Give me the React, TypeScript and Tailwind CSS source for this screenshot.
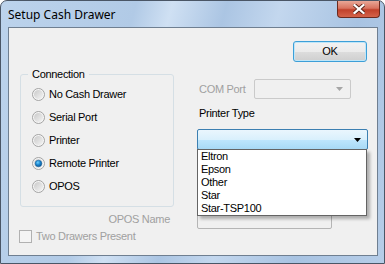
import React from "react";

const OPTIONS = ["No Cash Drawer", "Serial Port", "Printer", "Remote Printer", "OPOS"];
const PRINTERS = ["Eltron", "Epson", "Other", "Star", "Star-TSP100"];

function Radio({ checked }: { checked: boolean }) {
  return (
    <svg width="13" height="13" viewBox="0 0 13 13" className="flex-none">
      <defs>
        <linearGradient id="rg" x1="0" y1="0" x2="1" y2="1">
          <stop offset="0" stopColor="#c9c9c9" />
          <stop offset="1" stopColor="#f4f4f4" />
        </linearGradient>
        <radialGradient id="dot" cx="0.4" cy="0.35" r="0.7">
          <stop offset="0" stopColor="#6fd0ff" />
          <stop offset="0.5" stopColor="#1a86cf" />
          <stop offset="1" stopColor="#0b4f8c" />
        </radialGradient>
      </defs>
      <circle cx="6.5" cy="6.5" r="6" fill="#f5f5f5" stroke="#a3a3a3" />
      <circle cx="6.5" cy="6.5" r="4.5" fill="url(#rg)" />
      {checked && <circle cx="6.5" cy="6.5" r="3.3" fill="url(#dot)" stroke="#0f5d9a" strokeWidth="0.5" />}
    </svg>
  );
}

function Arrow({ color }: { color: string }) {
  return (
    <svg width="7" height="4" viewBox="0 0 7 4">
      <path d="M0 0h7L3.5 4z" fill={color} />
    </svg>
  );
}

export default function App() {
  return (
    <div className="w-[385px] h-[264px] overflow-hidden font-['Liberation_Sans',Arial,sans-serif] text-[11px] leading-[13px] tracking-[-0.3px] text-black">
      <div className="h-[264px] rounded-t-[7px] border border-[#4a5666] bg-[linear-gradient(105deg,#bcd3ec_0%,#b1cae6_30%,#cfe0f3_38%,#abc5e3_50%,#c3d7ee_62%,#a8c3e2_80%,#b6cde8_100%)]">
        <div className="flex h-[26px] items-start justify-between">
          <span className="pl-[7px] pt-[6px] font-['Noto_Sans',sans-serif] text-[12px] leading-[16px] tracking-normal text-black">Setup Cash Drawer</span>
          <div className="mr-[4px] flex h-[17px] w-[43px] items-center justify-center rounded-b-[4px] border border-t-0 border-[#6b2a1f] bg-[linear-gradient(180deg,#e9a797_0%,#d9735f_45%,#c1412b_55%,#d4634a_100%)]">
            <svg width="12" height="10" viewBox="0 0 12 10">
              <path d="M1.5 1L10.5 9M10.5 1L1.5 9" stroke="#5a2318" strokeWidth="4" strokeLinecap="square" />
              <path d="M1.5 1L10.5 9M10.5 1L1.5 9" stroke="#ffffff" strokeWidth="2.2" strokeLinecap="square" />
            </svg>
          </div>
        </div>
        <div className="ml-[7px] h-[229px] w-[370px] border border-[#6f7f91] bg-[#f0f0f0]">
          <div className="flex justify-end pr-[10px] pt-[13px]">
            <button className="h-[21px] w-[74px] rounded-[3px] border border-[#3c9fd8] bg-[linear-gradient(180deg,#f2f2f2_0%,#ebebeb_50%,#dddddd_51%,#cfcfcf_100%)] text-[11px] leading-[13px] shadow-[inset_0_0_0_1px_#bfe6f8]">
              OK
            </button>
          </div>
          <div className="mt-[6px] flex pl-[11px]">
            <div className="flex w-[154px] flex-col">
              <div className="relative mt-[6px] h-[133px] rounded-[3px] border border-[#d5dfe5] pt-[8px]">
                <span className="absolute -top-[7px] left-[7px] bg-[#f0f0f0] px-[4px]">Connection</span>
                {OPTIONS.map((o) => (
                  <div key={o} className="flex h-[23px] items-center gap-[4px] pl-[11px]">
                    <Radio checked={o === "Remote Printer"} />
                    <span>{o}</span>
                  </div>
                ))}
              </div>
              <div className="mt-[6px] pr-[4px] text-right text-[#a0a0a0]">OPOS Name</div>
              <div className="mt-[4px] -ml-[1px] flex items-center gap-[4px]">
                <span className="h-[13px] w-[13px] flex-none border border-[#b1b1b1] bg-[#f4f4f4]" />
                <span className="text-[#a0a0a0]">Two Drawers Present</span>
              </div>
            </div>
            <div className="ml-[23px] flex flex-col">
              <div className="mt-[11px] flex items-center">
                <span className="w-[57px] pl-[2px] text-[#a0a0a0]">COM Port</span>
                <div className="flex h-[20px] w-[97px] items-center justify-end rounded-[2px] border border-[#cacaca] pr-[7px]">
                  <Arrow color="#a6a6a6" />
                </div>
              </div>
              <div className="mt-[8px] pl-[2px]">Printer Type</div>
              <div className="relative mt-[9px]">
                <div className="flex h-[21px] w-[171px] items-center justify-end rounded-[2px] border border-[#3c7fb1] bg-[linear-gradient(180deg,#eaf6fd_0%,#d9f0fc_50%,#bee6fd_51%,#a7d9f5_100%)] pr-[6px]">
                  <Arrow color="#000" />
                </div>
                <div className="absolute left-0 top-[20px] z-10 w-[170px] border border-[#646464] bg-white shadow-[3px_3px_3px_rgba(0,0,0,0.28)]">
                  {PRINTERS.map((p) => (
                    <div key={p} className="h-[13px] pl-[3px] leading-[13px]">
                      {p}
                    </div>
                  ))}
                </div>
              </div>
              <div className="mt-[58px] h-[21px] w-[135px] rounded-[2px] border border-[#b5b5b5] bg-[#f0f0f0]" />
            </div>
          </div>
        </div>
      </div>
    </div>
  );
}
